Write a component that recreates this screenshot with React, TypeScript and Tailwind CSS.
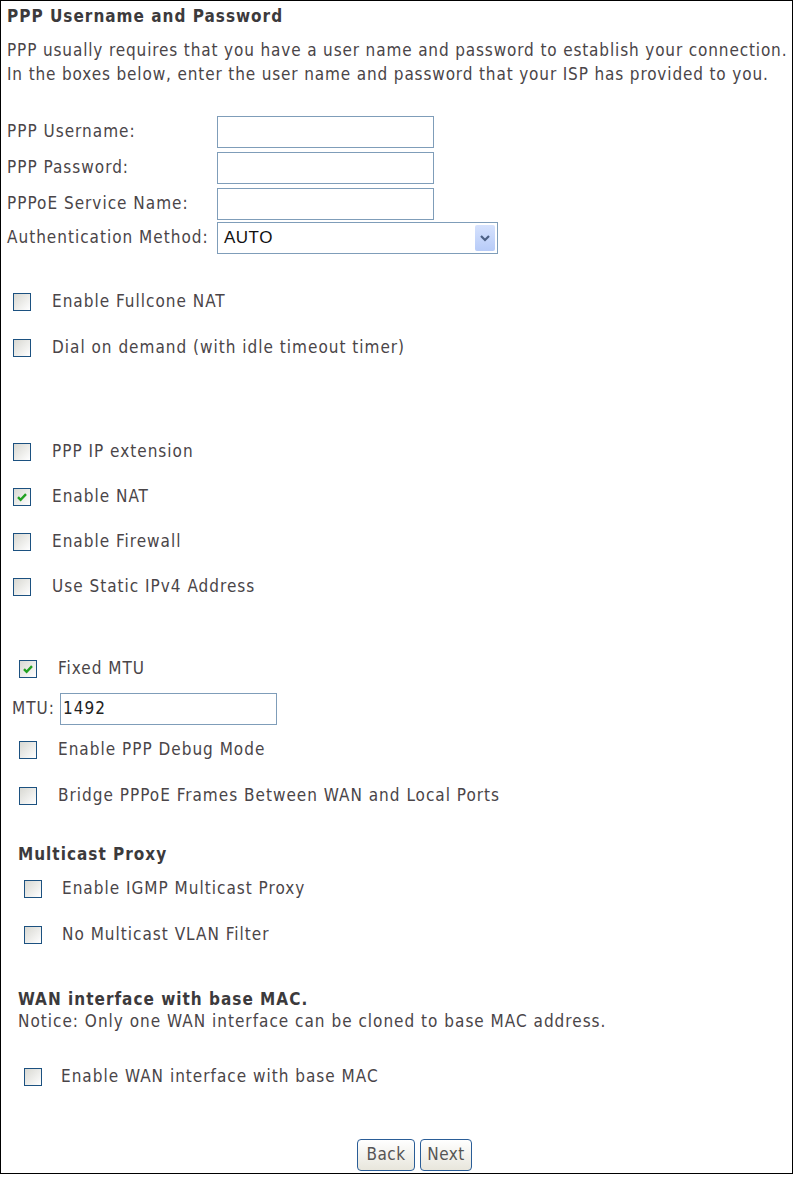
import React from 'react';

const font = { fontFamily: '"DejaVu Sans Condensed", "DejaVu Sans", sans-serif' };

function Check({ checked = false }: { checked?: boolean }) {
  return (
    <span className="flex h-[18px] w-[18px] shrink-0 items-center justify-center border border-[#1c5180] bg-linear-to-br from-[#d8d8d2] to-white">
      {checked && (
        <svg width="12" height="12" viewBox="0 0 12 12">
          <path d="M2 6.2 L4.6 8.8 L10 3.2" fill="none" stroke="#21a121" strokeWidth="2.4" />
        </svg>
      )}
    </span>
  );
}

function CheckRow({ label, checked, className, gap }: { label: string; checked?: boolean; className: string; gap: string }) {
  return (
    <div className={`flex h-[24px] items-center ${className}`}>
      <Check checked={checked} />
      <span className={gap}>{label}</span>
    </div>
  );
}

function TextBox({ value = '', width = 'w-[217px]' }: { value?: string; width?: string }) {
  return (
    <div className={`flex h-[32px] ${width} items-center border border-[#7f9db9] bg-white px-[2px] text-[17px] text-[#222]`}>
      {value}
    </div>
  );
}

export default function App() {
  return (
    <div
      style={font}
      className="flex h-[1174px] w-[793px] flex-col border border-black bg-white pt-[4px] text-[17px] tracking-[1px] text-[#4a4548]"
    >
      <div className="ml-[6px] flex h-[24px] items-center font-bold text-[#3c3a3c]">PPP Username and Password</div>
      <div className="ml-[6px] mt-[9px] leading-[24px] tracking-[0.86px]">
        PPP usually requires that you have a user name and password to establish your connection.
        <br />
        In the boxes below, enter the user name and password that your ISP has provided to you.
      </div>

      <div className="ml-[6px] mt-[30px] flex flex-col">
        <div className="flex h-[32px] items-center">
          <span className="w-[210px]">PPP Username:</span>
          <TextBox />
        </div>
        <div className="mt-[4px] flex h-[32px] items-center">
          <span className="w-[210px]">PPP Password:</span>
          <TextBox />
        </div>
        <div className="mt-[4px] flex h-[32px] items-center">
          <span className="w-[210px]">PPPoE Service Name:</span>
          <TextBox />
        </div>
        <div className="mt-[2px] flex h-[32px] items-center">
          <span className="w-[210px]">Authentication Method:</span>
          <div className="flex h-[32px] w-[281px] items-center justify-between border border-[#7f9db9] bg-white pl-[6px] pr-[2px]">
            <span className="tracking-[0.5px] text-[#111]" style={{ fontFamily: '"Liberation Sans", Arial, sans-serif' }}>AUTO</span>
            <span className="flex h-[26px] w-[20px] items-center justify-center rounded-[2px] bg-linear-to-b from-[#d6e2fd] to-[#b7cbf8]">
              <svg width="10" height="8" viewBox="0 0 10 8">
                <path d="M1 2 L5 6 L9 2" fill="none" stroke="#4d6185" strokeWidth="2.2" />
              </svg>
            </span>
          </div>
        </div>
      </div>

      <CheckRow label="Enable Fullcone NAT" className="ml-[12px] mt-[36px]" gap="ml-[21px]" />
      <CheckRow label="Dial on demand (with idle timeout timer)" className="ml-[12px] mt-[22px]" gap="ml-[21px]" />

      <CheckRow label="PPP IP extension" className="ml-[12px] mt-[80px]" gap="ml-[21px]" />
      <CheckRow label="Enable NAT" checked className="ml-[12px] mt-[21px]" gap="ml-[21px]" />
      <CheckRow label="Enable Firewall" className="ml-[12px] mt-[21px]" gap="ml-[21px]" />
      <CheckRow label="Use Static IPv4 Address" className="ml-[12px] mt-[21px]" gap="ml-[21px]" />

      <CheckRow label="Fixed MTU" checked className="ml-[18px] mt-[58px]" gap="ml-[21px]" />
      <div className="ml-[11px] mt-[12px] flex h-[32px] items-center">
        <span className="w-[48px]">MTU:</span>
        <TextBox value="1492" width="w-[217px]" />
      </div>
      <CheckRow label="Enable PPP Debug Mode" className="ml-[18px] mt-[13px]" gap="ml-[21px]" />
      <CheckRow label="Bridge PPPoE Frames Between WAN and Local Ports" className="ml-[18px] mt-[22px]" gap="ml-[21px]" />

      <div className="ml-[17px] mt-[35px] flex h-[24px] items-center font-bold text-[#3c3a3c]">Multicast Proxy</div>
      <CheckRow label="Enable IGMP Multicast Proxy" className="ml-[23px] mt-[10px]" gap="ml-[20px]" />
      <CheckRow label="No Multicast VLAN Filter" className="ml-[23px] mt-[22px]" gap="ml-[20px]" />

      <div className="ml-[17px] mt-[42px] flex h-[22px] items-center font-bold text-[#3c3a3c]">WAN interface with base MAC.</div>
      <div className="ml-[17px] flex h-[22px] items-center">Notice: Only one WAN interface can be cloned to base MAC address.</div>
      <CheckRow label="Enable WAN interface with base MAC" className="ml-[23px] mt-[32px]" gap="ml-[19px]" />

      <div className="mt-[50px] flex h-[32px] gap-[5px] pl-[356px]">
        <button className="h-[32px] w-[58px] rounded-[4px] border border-[#2a5d97] bg-linear-to-b from-white to-[#e8e6dc] tracking-[0.5px] text-[#555]">
          Back
        </button>
        <button className="h-[32px] w-[52px] rounded-[4px] border border-[#2a5d97] bg-linear-to-b from-white to-[#e8e6dc] tracking-[0.5px] text-[#555]">
          Next
        </button>
      </div>
    </div>
  );
}
